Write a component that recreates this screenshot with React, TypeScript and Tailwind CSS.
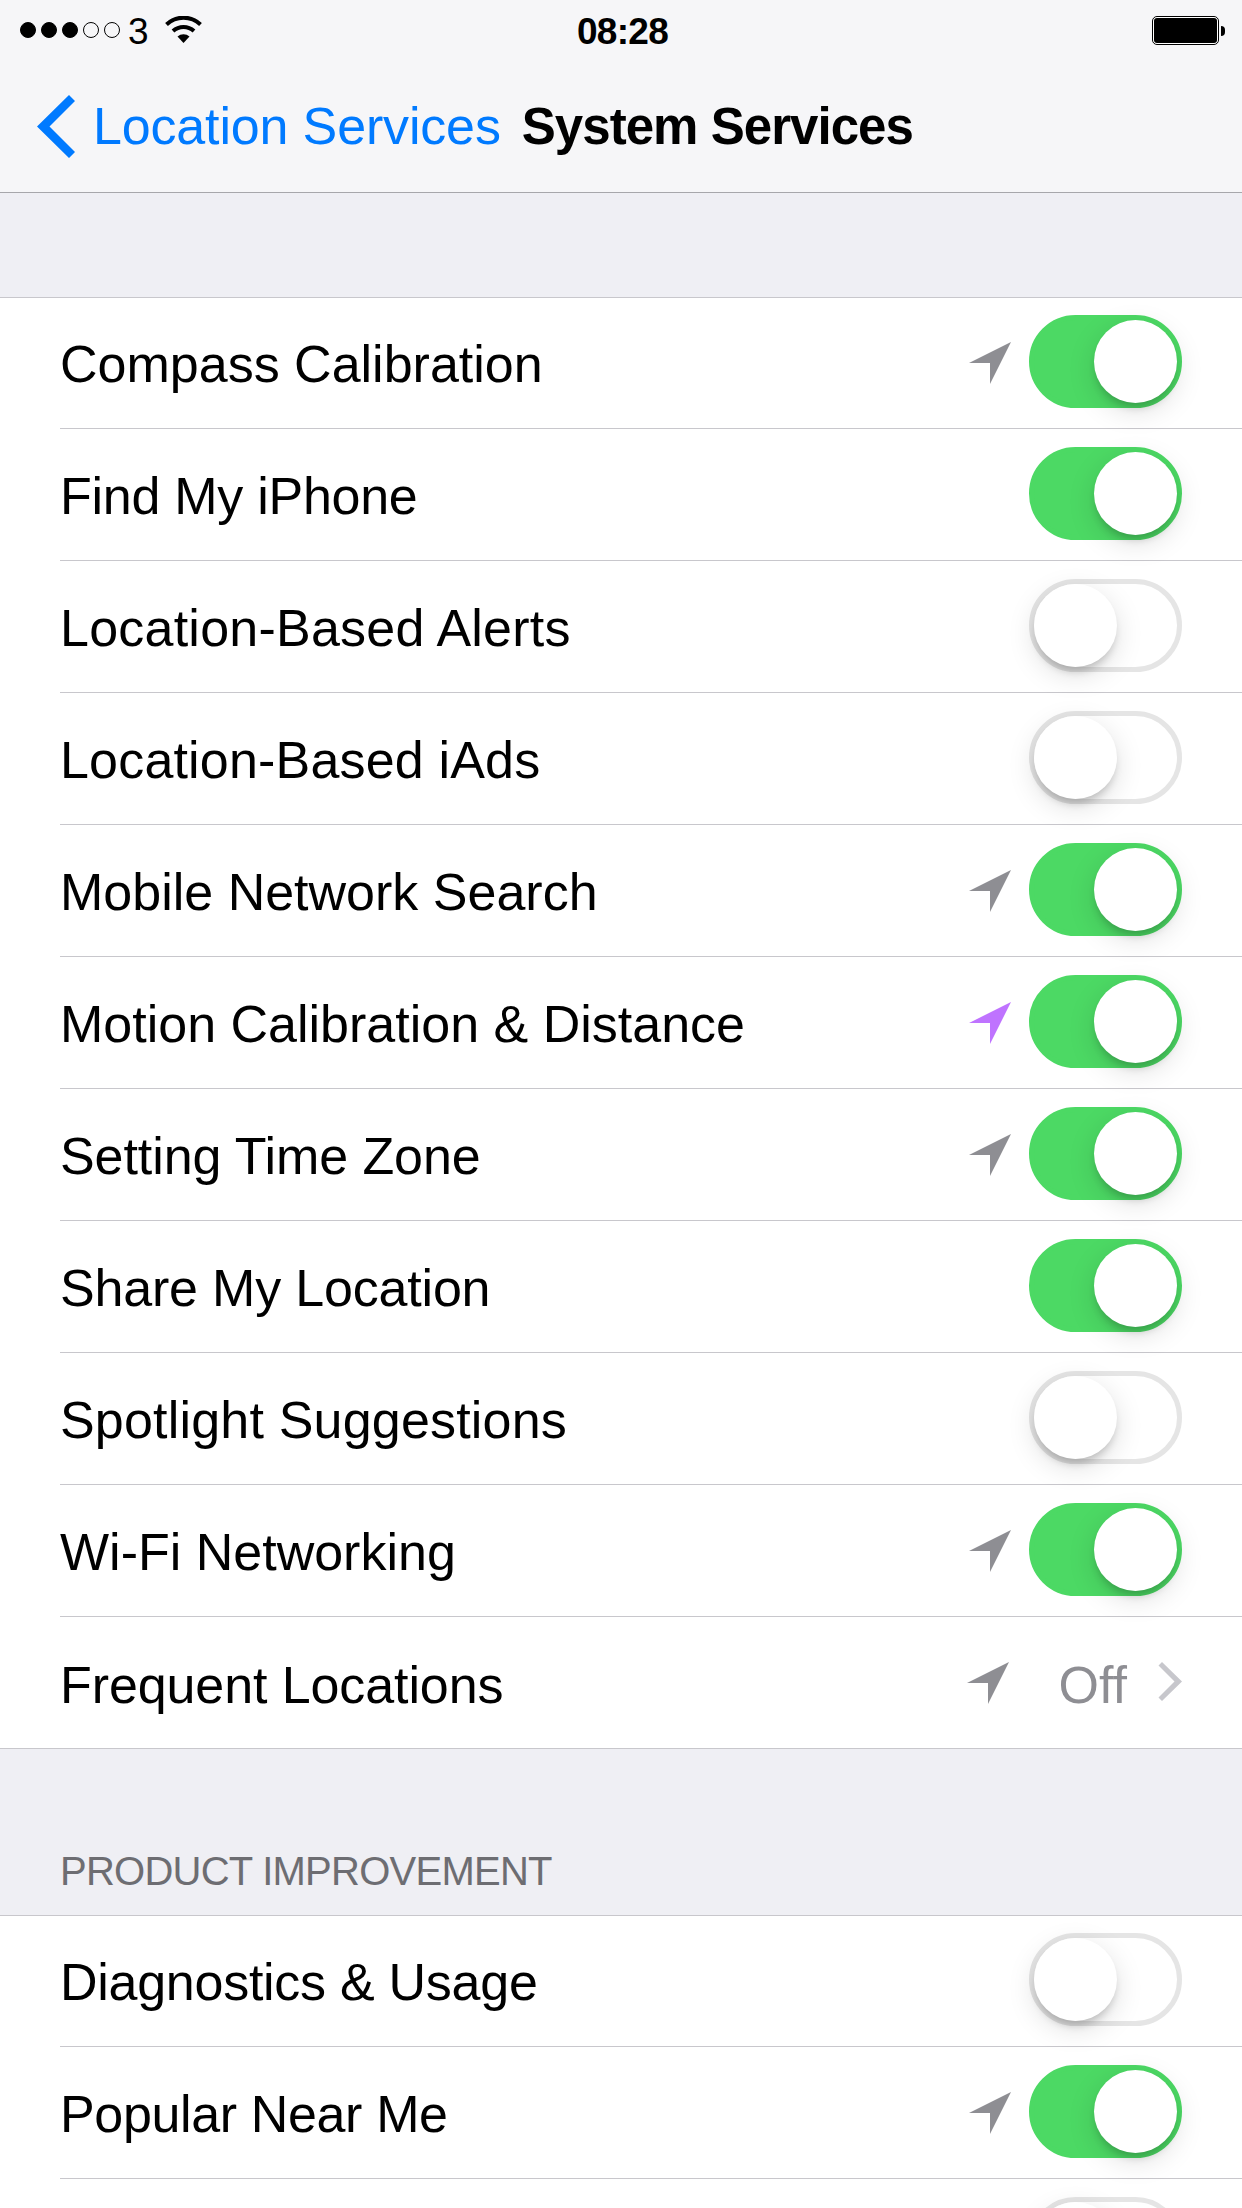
import { useState } from 'react';
import clsx from 'clsx';

type LocationUse = 'recent' | 'active';

interface Service {
    label: string;
    enabled: boolean;
    tracking?: string;
    location?: LocationUse;
}

const services: Service[] = [
    { label: 'Compass Calibration', enabled: true, location: 'recent' },
    { label: 'Find My iPhone', enabled: true, tracking: 'tracking-[-0.27px]' },
    { label: 'Location-Based Alerts', enabled: false, tracking: 'tracking-[0.23px]' },
    { label: 'Location-Based iAds', enabled: false, tracking: 'tracking-[0.18px]' },
    { label: 'Mobile Network Search', enabled: true, location: 'recent' },
    { label: 'Motion Calibration & Distance', enabled: true, location: 'active' },
    { label: 'Setting Time Zone', enabled: true, location: 'recent', tracking: 'tracking-[-0.08px]' },
    { label: 'Share My Location', enabled: true, tracking: 'tracking-[-0.19px]' },
    { label: 'Spotlight Suggestions', enabled: false, tracking: 'tracking-[0.19px]' },
    { label: 'Wi-Fi Networking', enabled: true, location: 'recent' }
];

const improvements: Service[] = [
    { label: 'Diagnostics & Usage', enabled: false, tracking: 'tracking-[-0.27px]' },
    { label: 'Popular Near Me', enabled: true, location: 'recent', tracking: 'tracking-[-0.36px]' },
    { label: '', enabled: false }
];

const LocationArrow = ({ use }: { use: LocationUse }) => (
    <svg
        viewBox="0 0 42 42"
        className={clsx('w-[42px] h-[42px] shrink-0', use === 'active' ? 'fill-[#bf73ff]' : 'fill-[#8e8e93]')}
    >
        <path d="M42 0L21 42V21H0Z" />
    </svg>
);

const Toggle = ({ label, initial }: { label: string; initial: boolean }) => {
    const [on, setOn] = useState(initial);

    return (
        <button
            type="button"
            role="switch"
            aria-checked={on}
            aria-label={label}
            onClick={() => setOn(!on)}
            className={clsx(
                'w-[153px] h-[93px] shrink-0 rounded-full border-[5px] flex',
                on ? 'bg-[#4cd964] border-[#4cd964] justify-end' : 'bg-white border-[#e5e5e5] justify-start'
            )}
        >
            <span className="w-[83px] h-[83px] rounded-full bg-white shadow-[0_8px_28px_rgba(0,0,0,0.13),0_7px_9px_-3px_rgba(0,0,0,0.2)]" />
        </button>
    );
};

// Rows keep a 132px pitch, the first one gives a pixel to the border of its group
const rowClass = 'h-[132px] first:h-[131px] flex items-end justify-between pr-[60px] border-b border-[#c8c7cc]';

const ServiceRow = ({ service }: { service: Service }) => (
    <li className={rowClass}>
        <span className={clsx('text-[52px] leading-[60px] pb-[34px] whitespace-nowrap', service.tracking)}>
            {service.label}
        </span>
        <div className="flex items-center gap-[18px] pb-5">
            {service.location && (
                <div className="pt-[2px]">
                    <LocationArrow use={service.location} />
                </div>
            )}
            <Toggle label={service.label} initial={service.enabled} />
        </div>
    </li>
);

const StatusBar = () => (
    <div className="h-[60px] grid grid-cols-3 items-start pl-5 pr-[17px]">
        <div className="flex items-start">
            <div className="flex gap-[5px] pt-[22px]">
                {[true, true, true, false, false].map((filled, i) => (
                    <span
                        key={i}
                        className={clsx('w-4 h-4 rounded-full border border-black', filled && 'bg-black')}
                    />
                ))}
            </div>
            <span className="ml-2 pt-[12px] text-[37px] leading-[40px]">3</span>
            <svg viewBox="0 0 37 27" className="w-[37px] h-[27px] mt-4 ml-4">
                <path d="M1.5 8.5a24.5 24.5 0 0 1 34 0" fill="none" stroke="#000" strokeWidth="4" />
                <path d="M8 15a15.5 15.5 0 0 1 21 0" fill="none" stroke="#000" strokeWidth="4" />
                <path d="M12.5 20.5a9 9 0 0 1 12 0L18.5 27Z" />
            </svg>
        </div>
        <span className="text-center pt-[12px] text-[37px] leading-[40px] font-bold tracking-[-0.7px]">08:28</span>
        <div className="flex items-center justify-end gap-0.5 pt-4">
            <div className="w-[67px] h-[29px] rounded-[5px] border border-black bg-white p-px">
                <div className="h-full rounded-[3px] bg-black" />
            </div>
            <div className="w-1 h-2.5 rounded-r-full bg-black" />
        </div>
    </div>
);

const NavBar = () => (
    <nav className="flex items-start pl-[37px]">
        <a href="#" className="flex items-start text-[#007aff]">
            <svg viewBox="0 0 38 63" className="w-[38px] h-[63px] mt-[35px] fill-current">
                <path d="M32 0L38 6L12.5 31.5L38 57L32 63L0 31.5Z" />
            </svg>
            <span className="pt-[36px] ml-[18px] text-[52px] leading-[60px] tracking-[-0.16px] whitespace-nowrap">
                Location Services
            </span>
        </a>
        <h1 className="pt-[36px] ml-[21px] text-[51px] leading-[61px] font-bold tracking-[-0.95px] whitespace-nowrap">
            System Services
        </h1>
    </nav>
);

const App = () => {
    return (
        <div className="w-[1242px] h-[2208px] overflow-hidden bg-[#efeff4] text-black font-['Liberation_Sans',Arial,sans-serif]">
            <header className="h-[193px] bg-[#f6f6f8] border-b border-[#a7a7ab]">
                <StatusBar />
                <NavBar />
            </header>

            <main className="pt-[104px]">
                <section className="bg-white border-y border-[#c8c7cc]">
                    <ul className="pl-[60px]">
                        {services.map((service) => (
                            <ServiceRow key={service.label} service={service} />
                        ))}
                        <li className="h-[131px] flex items-end justify-between pr-[60px]">
                            <span className="text-[52px] leading-[60px] pb-[33px] tracking-[-0.1px]">
                                Frequent Locations
                            </span>
                            <div className="flex items-end text-[#8e8e93]">
                                <div className="pb-[44px]">
                                    <LocationArrow use="recent" />
                                </div>
                                <span className="ml-[50px] text-[52px] leading-[60px] pb-[33px]">Off</span>
                                <svg viewBox="0 0 24 39" className="w-6 h-[39px] mb-[47px] ml-[31px] fill-[#c7c7cc]">
                                    <path d="M4 0L24 19.5L4 39L0.5 35.5L16.5 19.5L0.5 3.5Z" />
                                </svg>
                            </div>
                        </li>
                    </ul>
                </section>

                <h2 className="h-[166px] pl-[60px] pt-[99px] text-[40px] leading-[46px] tracking-[-0.75px] text-[#6d6d72]">
                    PRODUCT IMPROVEMENT
                </h2>

                <section className="bg-white border-t border-[#c8c7cc]">
                    <ul className="pl-[60px]">
                        {improvements.map((service) => (
                            <ServiceRow key={service.label} service={service} />
                        ))}
                    </ul>
                </section>
            </main>
        </div>
    );
};

export default App;
